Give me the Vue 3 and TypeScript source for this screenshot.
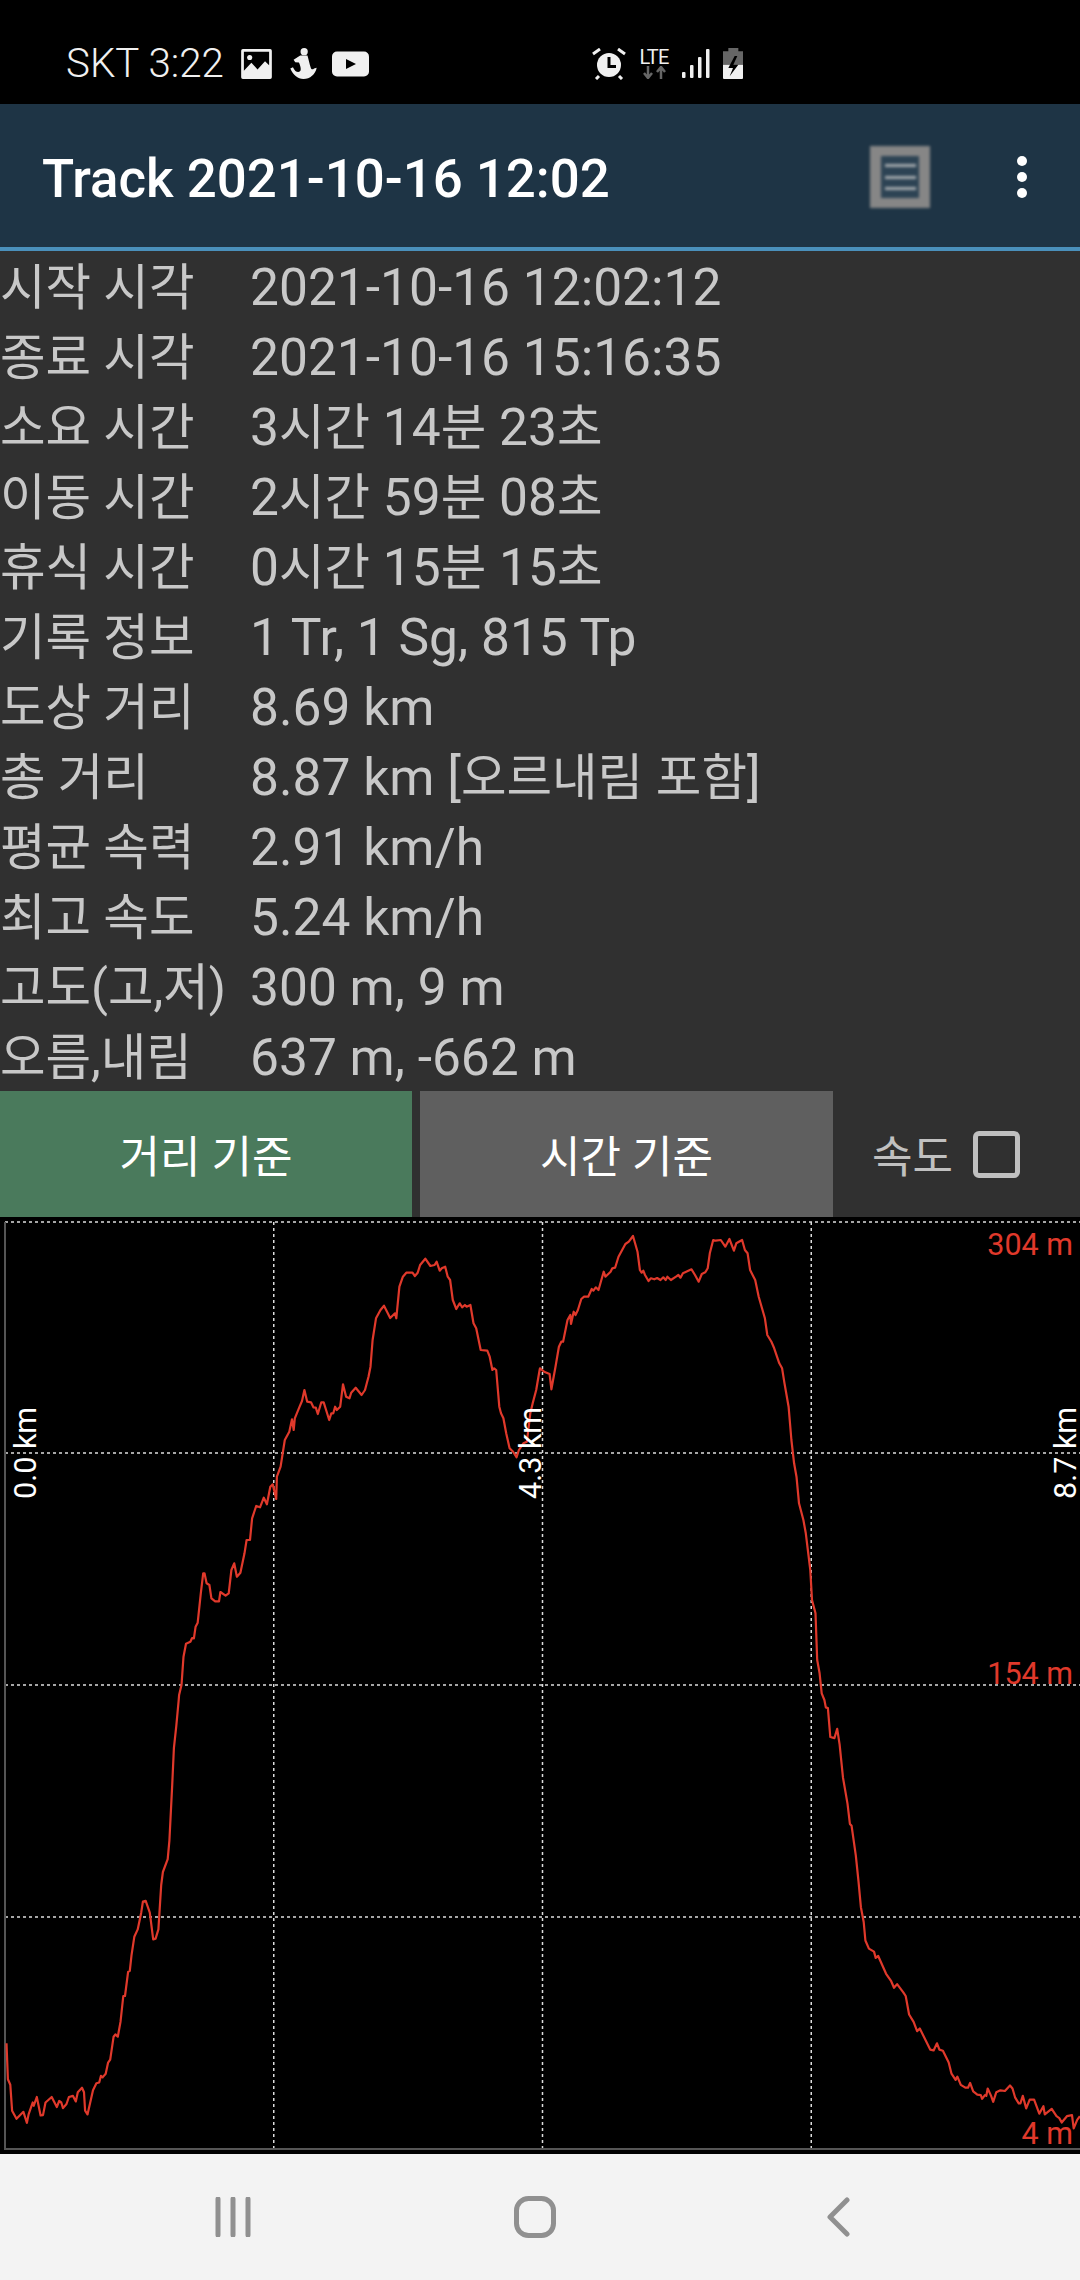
<script setup lang="ts">
import { computed } from 'vue'

// Track summary rows
const rows: [string, string][] = [
  ['시작 시각', '2021-10-16 12:02:12'],
  ['종료 시각', '2021-10-16 15:16:35'],
  ['소요 시간', '3시간 14분 23초'],
  ['이동 시간', '2시간 59분 08초'],
  ['휴식 시간', '0시간 15분 15초'],
  ['기록 정보', '1 Tr, 1 Sg, 815 Tp'],
  ['도상 거리', '8.69 km'],
  ['총 거리', '8.87 km [오르내림 포함]'],
  ['평균 속력', '2.91 km/h'],
  ['최고 속도', '5.24 km/h'],
  ['고도(고,저)', '300 m, 9 m'],
  ['오름,내림', '637 m, -662 m'],
]

// Hangul runs are set a little smaller than the digits around them
const splitRuns = (text: string) => text.split(/([가-힣]+)/).filter(Boolean)
const isHangul = (run: string) => /[가-힣]/.test(run)

// Chart geometry, relative to the top of the chart block
const CHART_TOP = 1217
const gridX = [273.75, 542.5, 811.25]
const gridY = [5, 236, 468, 700]

// Elevation profile traced in four pieces: [x, y] with each piece's own origin and scale
const lowerLeft = [19,928,23,1025,30,1040,35,1110,48,1132,68,1113,78,1143,83,1120,95,1088,98,1097,107,1073,118,1123,125,1122,132,1088,150,1073,165,1100,172,1084,178,1088,183,1103,193,1092,200,1073,212,1070,220,1085,226,1060,238,1048,244,1060,247,1110,254,1120,270,1055,280,1036,288,1034,293,1016,298,1020,307,1010,314,980,320,972,330,910,335,904,342,910,350,870,358,800,363,800,372,735,377,732,382,690,390,640,400,620,410,575,415,545,423,543,435,575,445,647,452,645,460,620,468,500,473,465,487,430,492,380,500,230,505,130,512,70,519,0]
const upperLeft = [520,1485,527,1455,533,1370,540,1331,553,1325,558,1314,563,1315,568,1280,574,1268,583,1180,590,1120,594,1120,600,1150,608,1155,614,1195,625,1204,636,1204,640,1176,655,1187,664,1180,672,1110,680,1090,688,1130,698,1118,710,1060,716,1020,726,1020,732,955,744,918,755,922,766,893,775,913,785,860,792,853,802,897,804,830,815,800,827,720,840,695,848,658,853,690,856,655,870,620,877,603,884,570,892,605,903,607,910,622,917,623,923,642,933,607,940,607,947,630,956,660,962,640,968,640,973,620,978,630,988,620,996,553,1005,590,1015,595,1020,578,1033,563,1050,585,1060,570,1070,530,1076,500,1082,420,1092,355,1105,330,1115,317,1133,354,1147,340,1151,355,1160,260,1170,230,1180,218,1198,218,1205,228,1213,218,1220,195,1235,176,1250,198,1262,195,1268,185,1277,212,1283,205,1293,200,1300,230,1307,240,1315,300,1325,327,1335,310,1342,322,1350,315,1355,320,1366,315,1375,370,1383,385,1396,450,1415,452,1422,470,1430,510,1435,505,1441,510,1450,620,1455,640,1462,655,1470,700,1480,745,1490,755,1500,772,1507,750,1520,730,1530,725,1540,640,1547,610,1557,570,1567,510]
const upperRight = [0,505,12,515,28,522,33,568,45,500,55,440,62,425,67,425,80,360,88,345,90,372,98,335,103,345,110,330,120,297,128,290,140,290,150,267,155,272,162,262,170,270,185,215,190,230,205,215,210,205,218,203,228,170,248,132,258,125,270,108,283,155,290,210,295,218,300,212,305,225,315,243,322,235,332,238,340,234,350,240,358,232,365,240,370,230,380,240,395,230,402,225,408,233,415,220,440,208,450,225,461,245,470,222,480,217,487,205,493,160,503,120,510,122,525,120,538,140,550,117,563,152,570,130,587,120,595,150,603,160,610,210,620,230,625,240,635,290,653,355,660,405,672,425,680,445,695,490,703,505,710,550,722,620,730,720,738,790,745,830,752,910,765,960,772,1000,785,1110,790,1200,800,1240,805,1380,812,1420,818,1480]
const lowerRight = [826,0,830,20,836,22,843,100,855,103,863,78,870,120,880,210,893,280,900,335,905,340,917,420,925,490,932,560,940,600,945,650,955,672,970,680,975,697,982,692,1005,740,1020,760,1028,778,1037,768,1055,790,1062,800,1072,850,1085,870,1095,895,1103,888,1133,945,1143,947,1153,928,1160,945,1170,948,1187,980,1195,1010,1207,1027,1212,1018,1222,1040,1235,1048,1243,1048,1249,1035,1258,1058,1270,1067,1280,1068,1284,1078,1292,1068,1296,1070,1300,1050,1310,1070,1316,1086,1325,1060,1337,1055,1350,1057,1365,1042,1372,1050,1380,1075,1390,1090,1395,1090,1402,1070,1412,1104,1422,1080,1435,1080,1450,1118,1462,1098,1466,1120,1486,1105,1500,1125,1508,1130,1515,1142,1530,1125,1545,1122,1550,1158,1560,1135,1568,1125]

function mapPiece(data: number[], ox: number, oy: number, sy: number): string[] {
  const out: string[] = []
  for (let i = 0; i < data.length; i += 2) {
    const x = ox + data[i] / 2.904
    const y = oy + data[i + 1] / sy - CHART_TOP
    out.push(`${x.toFixed(1)},${y.toFixed(1)}`)
  }
  return out
}

const profile = computed(() =>
  [
    ...mapPiece(lowerLeft, 0, 1700, 2.703),
    ...mapPiece(upperLeft, 0, 1200, 3),
    ...mapPiece(upperRight, 540, 1200, 3),
    ...mapPiece(lowerRight, 540, 1700, 2.703),
  ].join(' '),
)
</script>

<template>
  <div class="screen">
    <div class="status">
      <div class="status-left">
        <span class="carrier">SKT 3:22</span>
        <svg class="ic" width="31" height="30" viewBox="0 0 90 88">
          <path fill="#f0f0f0" fill-rule="evenodd" d="M5 0h80a5 5 0 0 1 5 5v78a5 5 0 0 1-5 5H5a5 5 0 0 1-5-5V5a5 5 0 0 1 5-5zM8 8v56l22-24 18 20 22-24 12 12V8z" />
          <circle cx="25" cy="25" r="7.500" fill="#f0f0f0" />
        </svg>
        <svg class="ic ic-anchor" width="27" height="31" viewBox="0 0 80 94">
          <circle cx="42" cy="11" r="11" fill="#f0f0f0" />
          <path fill="#f0f0f0" d="M10 36L30 23H52C56 36 58 48 62 60C64 66 68 66 72 62L80 60C76 80 60 94 40 94C22 94 8 80 0 62L8 58C14 72 24 76 30 70C34 66 30 52 26 44L15 43z" />
        </svg>
        <svg class="ic ic-yt" width="37" height="26" viewBox="0 0 37 26">
          <rect x="0" y="0.500" width="37" height="25" rx="5" fill="#f0f0f0" />
          <path d="M14 8l10 5-10 5z" fill="#000" />
        </svg>
      </div>
      <div class="status-right">
        <svg class="ic-alarm" width="34" height="32" viewBox="0 0 34 32">
          <circle cx="17" cy="17" r="12" fill="#f0f0f0" />
          <path d="M17 9v9.500h7" fill="none" stroke="#000" stroke-width="3" />
          <path d="M1 6l7-5M33 6l-7-5M4 31l3-3M30 31l-3-3" stroke="#f0f0f0" stroke-width="3" />
        </svg>
        <div class="lte">
          <span class="lte-text">LTE</span>
          <svg width="23" height="13" viewBox="0 0 23 13">
            <path d="M5 0v11M1 7l4 5 4-5" fill="none" stroke="#666" stroke-width="2.500" />
            <path d="M18 13V2M14 6l4-5 4 5" fill="none" stroke="#666" stroke-width="2.500" />
          </svg>
        </div>
        <svg width="28" height="30" viewBox="0 0 28 30">
          <rect x="0" y="23" width="3.500" height="6" rx="1" fill="#f0f0f0" />
          <rect x="8" y="16" width="3.500" height="13" rx="1" fill="#f0f0f0" />
          <rect x="16" y="8" width="3.500" height="21" rx="1" fill="#f0f0f0" />
          <rect x="24" y="0" width="3.500" height="29" rx="1" fill="#f0f0f0" />
        </svg>
        <svg class="ic-batt" width="20" height="31" viewBox="0 0 60 93">
          <path d="M16 0H46V10H60V50H0V10H16z" fill="#666" />
          <path d="M0 50H60V90a3 3 0 0 1-3 3H3a3 3 0 0 1-3-3z" fill="#f0f0f0" />
          <path d="M35 24L16 60H30L20 85L46 50H31L43 24z" fill="#000" />
        </svg>
      </div>
    </div>

    <div class="toolbar">
      <span class="title">Track 2021-10-16 12:02</span>
      <div class="list-btn">
        <div class="list-inner">
          <i></i><i></i><i></i>
        </div>
      </div>
      <div class="more"><i></i><i></i><i></i></div>
    </div>

    <div class="info">
      <template v-for="row in rows" :key="row[0]">
        <span class="label">{{ row[0] }}</span>
        <span class="value">
          <span v-for="(run, i) in splitRuns(row[1])" :key="i" :class="{ hangul: isHangul(run) }">{{ run }}</span>
        </span>
      </template>
    </div>

    <div class="controls">
      <button class="mode mode-on" type="button">거리 기준</button>
      <button class="mode mode-off" type="button">시간 기준</button>
      <div class="speed">
        <span>속도</span>
        <span class="check"></span>
      </div>
    </div>

    <div class="chart">
      <svg class="chart-svg" width="1080" height="937" viewBox="0 0 1080 937">
        <line v-for="y in gridY" :key="y" x1="5" x2="1080" :y1="y" :y2="y" class="grid" />
        <line v-for="x in gridX" :key="x" :x1="x" :x2="x" y1="5" y2="932" class="grid" />
        <path d="M5 5V932H1080" fill="none" stroke="#555" stroke-width="2" />
        <polyline :points="profile" fill="none" stroke="#e0392b" stroke-width="2.200" stroke-linejoin="round" />
        <text class="axis-x" transform="translate(36 282) rotate(-90)">0.0 km</text>
        <text class="axis-x" transform="translate(541 282) rotate(-90)">4.3 km</text>
        <text class="axis-x" transform="translate(1076 282) rotate(-90)">8.7 km</text>
        <text class="axis-y" x="1073" y="38">304 m</text>
        <text class="axis-y" x="1073" y="467">154 m</text>
        <text class="axis-y" x="1073" y="927">4 m</text>
      </svg>
    </div>

    <div class="nav">
      <svg width="36" height="40" viewBox="0 0 36 40">
        <path d="M3 2v36M18 2v36M33 2v36" stroke="#909090" stroke-width="5" stroke-linecap="round" />
      </svg>
      <svg width="42" height="42" viewBox="0 0 42 42">
        <rect x="2.500" y="2.500" width="37" height="37" rx="12" fill="none" stroke="#909090" stroke-width="5" />
      </svg>
      <svg width="24" height="40" viewBox="0 0 24 40">
        <path d="M21 3L4 20l17 17" fill="none" stroke="#909090" stroke-width="5" stroke-linecap="round" stroke-linejoin="round" />
      </svg>
    </div>
  </div>
</template>

<style>
html,
body {
  background: #000;
}
</style>

<style scoped>
.screen {
  width: 1080px;
  height: 2280px;
  display: flex;
  flex-direction: column;
  overflow: hidden;
  background: #303030;
  font-family: Roboto, "Noto Sans CJK KR", sans-serif;
}

/* Status bar */
.status {
  height: 104px;
  background: #000;
  display: flex;
  align-items: center;
  padding-left: 66px;
  color: #f0f0f0;
}

.status-left {
  display: flex;
  align-items: center;
  height: 100%;
  padding-top: 23px;
  box-sizing: border-box;
}

.carrier {
  font-size: 40.300px;
  font-weight: 300;
  margin-right: 17px;
}

.ic-anchor {
  margin: 0 15px 0 18px;
}

.status-right {
  margin-left: auto;
  margin-right: 337px;
  display: flex;
  align-items: center;
  padding-top: 23px;
  gap: 12px;
}

.ic-batt {
  margin-left: 1px;
}

.lte {
  display: flex;
  flex-direction: column;
  align-items: center;
  width: 32px;
}

.lte-text {
  font-size: 20px;
  line-height: 18px;
  letter-spacing: -0.8px;
}

/* Toolbar */
.toolbar {
  height: 143px;
  box-sizing: content-box;
  background: #1e3445;
  border-bottom: 4px solid #4a90bb;
  display: flex;
  align-items: center;
}

.title {
  font-size: 52.800px;
  font-weight: 500;
  color: #fff;
  margin-left: 42px;
  padding-top: 6px;
}

.list-btn {
  margin-left: auto;
  margin-top: 3px;
  width: 60px;
  height: 62px;
  background: #868686;
  filter: blur(1.5px);
  display: flex;
  align-items: center;
  justify-content: center;
}

.list-inner {
  width: 38px;
  height: 42px;
  background: #2d4354;
  display: flex;
  flex-direction: column;
  justify-content: space-evenly;
  align-items: center;
}

.list-inner i {
  width: 31px;
  height: 3px;
  background: #a5aaae;
}

.more {
  width: 10px;
  margin: 3px 53px 0 87px;
  display: flex;
  flex-direction: column;
  gap: 6px;
}

.more i {
  width: 10px;
  height: 10px;
  border-radius: 50%;
  background: #fff;
}

/* Summary */
.info {
  display: grid;
  grid-template-columns: 250px 1fr;
  grid-auto-rows: 70px;
  color: #c8c8c8;
  font-size: 51.500px;
  white-space: nowrap;
}

/* A taller line than the row pulls the text down to where it sits */
.label,
.value {
  line-height: 74px;
}

.label {
  font-size: 49.500px;
}

.hangul {
  font-size: 49.500px;
}

/* Buttons */
.controls {
  height: 126px;
  display: flex;
}

.mode {
  width: 412px;
  height: 100%;
  border: none;
  padding: 0;
  color: #fff;
  font: inherit;
  font-size: 44px;
}

.mode-on {
  background: #4a7a5c;
  margin-right: 8px;
}

.mode-off {
  width: 413px;
  background: #5f5f5f;
}

.speed {
  display: flex;
  align-items: center;
  margin-left: 39px;
  color: #c0c0c0;
  font-size: 44px;
}

.check {
  box-sizing: border-box;
  width: 47px;
  height: 47px;
  border: 5px solid #c0c0c0;
  border-radius: 6px;
  margin-left: 20px;
}

/* Chart */
.chart {
  flex: 1;
  background: #000;
}

.chart-svg {
  display: block;
}

.grid {
  stroke: #ddd;
  stroke-width: 1.500;
  stroke-dasharray: 3 3;
}

.axis-x {
  fill: #fff;
  font-size: 30.500px;
}

.axis-y {
  fill: #e0392b;
  font-size: 30.500px;
  text-anchor: end;
}

/* Navigation bar */
.nav {
  height: 126px;
  background: #f3f3f3;
  display: flex;
  align-items: center;
  padding-left: 215px;
}

.nav svg:nth-child(2) {
  margin-left: 263px;
}

.nav svg:nth-child(3) {
  margin-left: 270px;
}
</style>
